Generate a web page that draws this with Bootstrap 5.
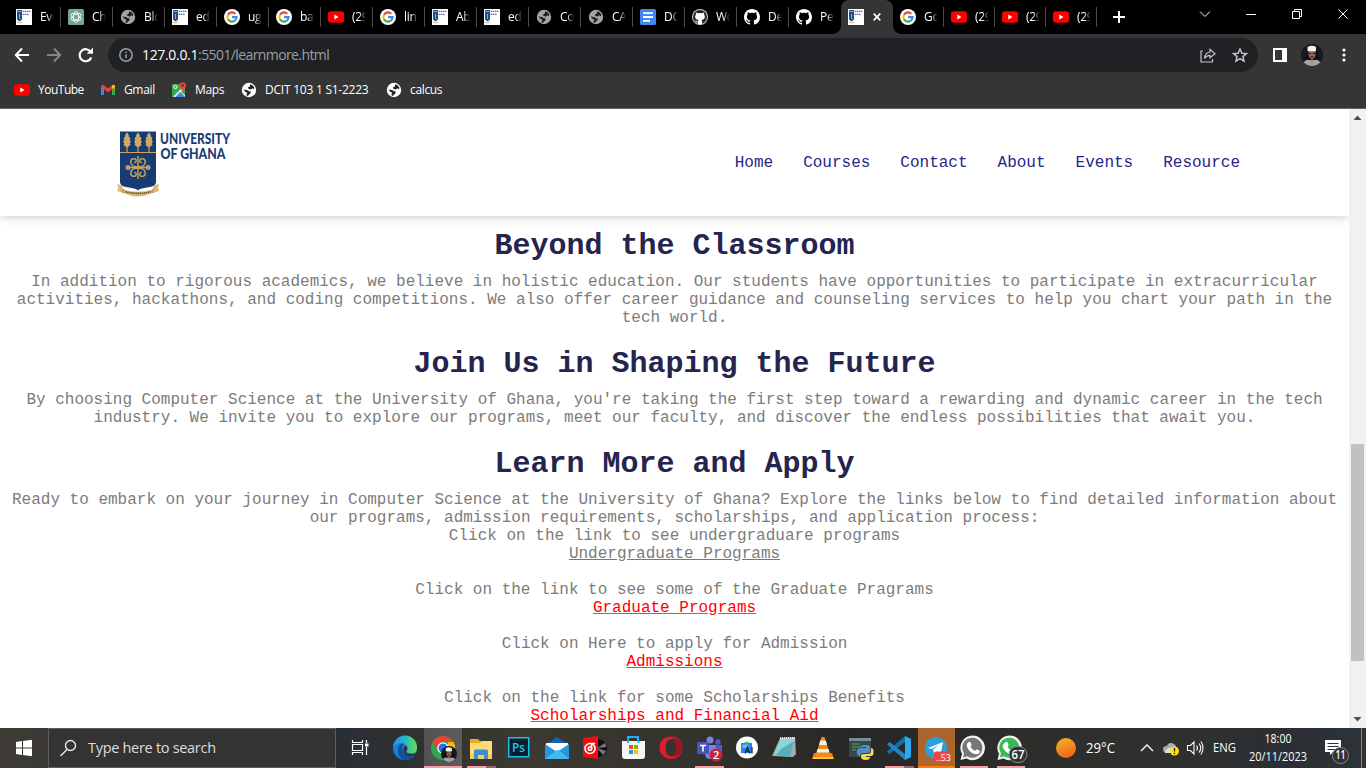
<!DOCTYPE html>
<html lang="en">
<head>
<meta charset="utf-8">
<title>Learn More</title>
<link href="https://cdn.jsdelivr.net/npm/bootstrap@5.3.0/dist/css/bootstrap.min.css" rel="stylesheet">
<style>
html,body{height:100%;overflow:hidden}
body{font-family:"Open Sans","Noto Sans",sans-serif;font-size:12px;color:#fff;line-height:16px}
svg{display:block;flex:none}
.desk{width:1366px;height:768px}
/* browser chrome */
.strip{height:34px;background:#000;padding-left:9px}
.btab{width:52px;height:34px;padding-left:7px;position:relative}
.btab:after{content:"";position:absolute;right:0;top:7px;width:1px;height:20px;background:#4a4a4a}
.btab.nosep:after{display:none}
.btab.late{width:51px}
.btab .ttl{width:14px;margin-left:8px;overflow:hidden;white-space:nowrap;letter-spacing:-.3px;-webkit-mask-image:linear-gradient(90deg,#000 50%,transparent 100%)}
.btab.live{background:#353535;border-radius:8px 8px 0 0}
.btab.live:before{content:"";position:absolute;left:-8px;right:-8px;bottom:0;height:8px;background:radial-gradient(circle at 0 0,transparent 7.5px,#353535 8px) left/8px 8px no-repeat,radial-gradient(circle at 100% 0,transparent 7.5px,#353535 8px) right/8px 8px no-repeat}
.tools{height:42px;background:#353535;padding-left:14px}
.omni{height:34px;width:1150px;border-radius:17px;background:#202124;margin-left:14px;padding:0 9px 0 10px;font-size:14px}
.omni .addr{letter-spacing:-.6px;color:#9aa0a6}
.omni .host{letter-spacing:-.33px;color:#fff}
.marks{height:33px;background:#353535;border-bottom:1px solid #68605f;padding-left:14px;font-size:12px}
.marks span{letter-spacing:-.35px;white-space:nowrap}
/* web page */
.view{height:619px;background:#fff;overflow:hidden}
.site{width:1349px;font-family:"Liberation Mono",monospace;font-size:16px;line-height:18px;color:#7c7c7c}
.site header{height:107px;padding:0 109px 0 108px;box-shadow:0 0 10px rgba(0,0,0,.25);position:relative}
.site header a{color:#262689;text-decoration:none}
.site nav{gap:30px}
.site section{padding:13px 10px 0}
.site h1{font-size:30px;font-weight:700;line-height:34px;color:#24244f;margin:0 0 10px}
.site p{margin:0 0 20px}
.site .more a{color:#f00;text-decoration:underline;text-decoration-color:#777}
.site .more a.plain{color:#7c7c7c}
.sbar{width:17px;background:#f1f1f1;position:relative;z-index:1}
.thumb{width:13px;height:217px;background:#c1c1c1;margin-top:318px}
/* taskbar */
.task{height:40px;background:linear-gradient(90deg,#3f3c37 0,#3b3935 48px,#2a2f35 345px,#30322f 420px,#3c3932 520px,#35332d 680px,#272726 850px,#2c2c2a 1000px,#30302e 1140px,#2b2f33 1290px,#2d3337 1366px)}
.find{width:288px;height:40px;background:#333;border:1px solid #5d5d5d;padding-left:10px;color:#ddd}
.find span{margin-left:11px;letter-spacing:-.3px;font-size:14.5px}
.app{width:38px;height:40px;position:relative;flex:none}
.app.slim{width:37px}
.app.on:after{content:"";position:absolute;left:5px;right:4px;bottom:0;height:2px;background:#f99ba5}
.app.sel{background:linear-gradient(90deg,#505151,#5c5c5b)}
.app.sel:after{left:0;right:0}
.app.two:after{background:linear-gradient(90deg,#f99ba5 67%,#93666a 67%)}
.app.tg{background:linear-gradient(#a9652c,#ae662b)}
.app.tg:after{left:0;right:0;background:#ff7a08}
</style>
<script src="https://cdn.jsdelivr.net/npm/bootstrap@5.3.0/dist/js/bootstrap.bundle.min.js"></script>
</head>
<body>
<svg width="0" height="0" class="position-absolute">
<defs>
<symbol id="ug" viewBox="0 0 16 16"><path fill="#fff" d="M0 0h16v16H0z"/><path fill="#234d80" d="M1 1h5v9.500l-2.500 2-2.500-2z"/><path stroke="#c2a468" d="M1.500 2.500h4M3.500 5v5"/><path stroke="#d2b076" fill="none" d="M1 13q2.500 2 5 0"/><path stroke="#5a79a5" stroke-width="1.300" stroke-dasharray="1.500 .5" d="M6.500 2.300H15M6.500 5.300H13"/></symbol>
<symbol id="gpt" viewBox="0 0 16 16"><rect width="16" height="16" rx="1.500" fill="#73a698"/><g fill="none" stroke="#fff" stroke-width=".8"><ellipse cx="8" cy="8" rx="2.700" ry="5.500"/><ellipse cx="8" cy="8" rx="2.700" ry="5.500" transform="rotate(60 8 8)"/><ellipse cx="8" cy="8" rx="2.700" ry="5.500" transform="rotate(120 8 8)"/></g></symbol>
<symbol id="globe" viewBox="0 0 16 16"><circle cx="8" cy="8" r="7.200" fill="currentColor"/><path fill="#202124" d="M9 2.300 11.500 3.200 13.300 5.500 13 7.200 11.300 6.300 10 7.500 8.300 7.200 7 6.300 7.300 5 9 4.600zM2.500 7.500 6 8 8 9.200 9.800 9.500 9.300 11.500 7.500 13 7 14 4.500 12.800 6 12.400 6.200 10.800 4.300 9.800z"/></symbol>
<symbol id="goo" viewBox="0 0 16 16"><circle cx="8" cy="8" r="8" fill="#fff"/><g fill="none" stroke-width="2.200"><path stroke="#ea4335" d="M4 5.700A4.600 4.600 0 0 1 11.300 4.700"/><path stroke="#fbbc05" d="M4 5.700A4.600 4.600 0 0 0 4 10.300"/><path stroke="#34a853" d="M4 10.300A4.600 4.600 0 0 0 11 11.500"/><path stroke="#4285f4" d="M11 11.500A4.600 4.600 0 0 0 12.600 8.100H8"/></g></symbol>
<symbol id="yt" viewBox="0 0 16 16"><rect y="2.200" width="16" height="11.600" rx="2.800" fill="#f00"/><path fill="#fff" d="M6.300 5.500v5l4.200-2.500z"/></symbol>
<symbol id="doc" viewBox="0 0 16 16"><rect width="16" height="16" rx="1.500" fill="#4285f4"/><path stroke="#fff" stroke-width="1.800" d="M3 4.200h10M3 8h10M3 11.800h7"/></symbol>
<symbol id="ghp" viewBox="0 0 16 16"><path d="M8 0C3.580 0 0 3.580 0 8c0 3.540 2.290 6.530 5.470 7.590.4.070.550-.170.550-.380 0-.190-.010-.820-.010-1.490-2.010.370-2.530-.490-2.690-.940-.090-.230-.480-.940-.820-1.130-.280-.150-.680-.520-.010-.530.630-.010 1.080.580 1.230.820.720 1.210 1.870.870 2.330.660.070-.520.280-.870.510-1.070-1.780-.2-3.640-.890-3.640-3.950 0-.870.310-1.590.820-2.150-.080-.2-.360-1.020.080-2.120 0 0 .670-.210 2.200.820.640-.180 1.320-.270 2-.270s1.360.090 2 .270c1.530-1.040 2.200-.820 2.200-.820.440 1.100.160 1.920.080 2.120.510.560.820 1.270.820 2.150 0 3.070-1.870 3.750-3.650 3.950.290.250.540.730.540 1.480 0 1.070-.010 1.930-.010 2.200 0 .210.150.460.550.380A8.010 8.010 0 0 0 16 8c0-4.420-3.580-8-8-8"/></symbol>
<symbol id="gh" viewBox="0 0 16 16"><use href="#ghp" fill="#fff"/></symbol>
<symbol id="ghd" viewBox="0 0 16 16"><circle cx="8" cy="8" r="8" fill="#c9ccd0"/><circle cx="8" cy="8" r="7" fill="#24292f"/><path fill="#fff" d="M4 3.500l2 .8q2-.5 4 0l2-.8.2 2.200q1 1.300.6 3-.6 2-3.300 2.300.5.500.5 1.500v2.500q-2 .8-4 0v-1.500q-1.700.3-2.300-1.300l-.7-.8q1-.2 1.500.7.600.8 1.500.4 0-1 .5-1.500-2.700-.3-3.300-2.300-.4-1.700.6-3z"/></symbol>
<symbol id="nun" viewBox="0 0 22 22"><circle cx="11" cy="11" r="11" fill="#17171f"/><path fill="#a4a4ac" d="M2.500 18 8 14.500h6l5.500 3.500A11 11 0 0 1 2.500 18z"/><path fill="#0c0c10" d="M6 6h10l1.500 9-3.500 1-6 0-3.500-1z"/><ellipse cx="11" cy="10" rx="3.600" ry="5" fill="#926553"/><path fill="#f2f2f2" d="M6.500 3q4.500-2.500 8.500 0v4.300H6.500z"/><path stroke="#241514" d="M8 9.500h2M12 9.500h2M9.800 12.700h2.400"/><path stroke="#b58068" stroke-width="1.500" d="M11 15v6"/></symbol>
</defs>
</svg>
<div class="desk d-flex flex-column">
<div class="strip d-flex">
<div class="btab d-flex align-items-center"><svg width="16" height="16"><use href="#ug"/></svg><span class="ttl">Eve</span></div>
<div class="btab d-flex align-items-center"><svg width="16" height="16"><use href="#gpt"/></svg><span class="ttl">Ch</span></div>
<div class="btab d-flex align-items-center"><svg width="16" height="16" color="#a0a4a8"><use href="#globe"/></svg><span class="ttl">Blo</span></div>
<div class="btab d-flex align-items-center"><svg width="16" height="16"><use href="#ug"/></svg><span class="ttl">ed</span></div>
<div class="btab d-flex align-items-center"><svg width="16" height="16"><use href="#goo"/></svg><span class="ttl">ug</span></div>
<div class="btab d-flex align-items-center"><svg width="16" height="16"><use href="#goo"/></svg><span class="ttl">ba</span></div>
<div class="btab d-flex align-items-center"><svg width="16" height="16"><use href="#yt"/></svg><span class="ttl">(29</span></div>
<div class="btab d-flex align-items-center"><svg width="16" height="16"><use href="#goo"/></svg><span class="ttl">lin</span></div>
<div class="btab d-flex align-items-center"><svg width="16" height="16"><use href="#ug"/></svg><span class="ttl">Ab</span></div>
<div class="btab d-flex align-items-center"><svg width="16" height="16"><use href="#ug"/></svg><span class="ttl">ed</span></div>
<div class="btab d-flex align-items-center"><svg width="16" height="16" color="#a0a4a8"><use href="#globe"/></svg><span class="ttl">Co</span></div>
<div class="btab d-flex align-items-center"><svg width="16" height="16" color="#a0a4a8"><use href="#globe"/></svg><span class="ttl">CA</span></div>
<div class="btab d-flex align-items-center"><svg width="16" height="16"><use href="#doc"/></svg><span class="ttl">DC</span></div>
<div class="btab d-flex align-items-center"><svg width="16" height="16"><use href="#ghd"/></svg><span class="ttl">Wo</span></div>
<div class="btab d-flex align-items-center"><svg width="16" height="16"><use href="#gh"/></svg><span class="ttl">De</span></div>
<div class="btab nosep d-flex align-items-center"><svg width="16" height="16"><use href="#gh"/></svg><span class="ttl">Pe</span></div>
<div class="btab live nosep d-flex align-items-center"><svg width="16" height="16"><use href="#ug"/></svg><svg width="8" height="8" style="margin-left:9px" stroke="#fff" stroke-width="1.700"><path d="M.7.700l6.600 6.600M7.300.700.7 7.300"/></svg></div>
<div class="btab late d-flex align-items-center"><svg width="16" height="16"><use href="#goo"/></svg><span class="ttl">Go</span></div>
<div class="btab late d-flex align-items-center"><svg width="16" height="16"><use href="#yt"/></svg><span class="ttl">(29</span></div>
<div class="btab late d-flex align-items-center"><svg width="16" height="16"><use href="#yt"/></svg><span class="ttl">(29</span></div>
<div class="btab late d-flex align-items-center"><svg width="16" height="16"><use href="#yt"/></svg><span class="ttl">(29</span></div>
<svg width="269" height="34" fill="none" stroke="#fff"><path stroke-width="2" d="M22 11v12M16 17h12"/><path d="M103 11.500l5 5 5-5M149 14.500h10M197.500 12v-2.500h7v7H202M195.500 11.500h7v7h-7zM241.500 9.500l9 9M250.500 9.500l-9 9"/></svg>
</div>
<div class="tools d-flex align-items-center">
<svg width="80" height="18" fill="none" stroke-width="2"><path stroke="#fff" d="M15 9H2M8 2.500 1.800 9 8 15.500"/><path stroke="#868686" d="M33 9h13M40 2.500 46.200 9 40 15.500"/><path stroke="#fff" stroke-width="2.200" d="M77.200 11.500a6 6 0 1 1-.5-5.500"/><path fill="#fff" d="M79 1.500v6.300h-6.300z"/></svg>
<div class="omni d-flex align-items-center">
<svg width="16" height="16" fill="none" stroke="#9aa0a6" stroke-width="1.500"><circle cx="8" cy="8" r="6.200"/><path d="M8 7.200v4M8 4.500v1.500"/></svg>
<div class="addr flex-grow-1 ps-2"><span class="host">127.0.0.1</span>:5501/learnmore.html</div>
<svg width="50" height="18" fill="none" stroke="#c4c4c4" stroke-width="1.200"><path d="M4 5H2v11h11.500v-3M5.500 12.500q.5-6 5.500-6.500V3.300L16 7.800l-5 4V9.300Q7.500 9.500 5.500 12.500z"/><path stroke-width="1.500" d="M41 3l1.900 4.200 4.500.4-3.400 3 1 4.500-4-2.400-4 2.400 1-4.500-3.400-3 4.500-.4z"/></svg>
</div>
<svg width="14" height="14" style="margin-left:15px"><path fill="#fff" d="M0 0h14v14H0z"/><path fill="#353535" d="M2 2h7v10H2z"/></svg>
<svg width="22" height="22" style="margin-left:14px"><use href="#nun"/></svg>
<svg width="4" height="14" style="margin-left:19px" fill="#fff"><circle cx="2" cy="2" r="1.600"/><circle cx="2" cy="7" r="1.600"/><circle cx="2" cy="12" r="1.600"/></svg>
</div>
<div class="marks d-flex align-items-start">
<svg width="16" height="16" style="margin-top:6px"><use href="#yt"/></svg><span style="width:78px;padding:6px 0 0 8px;letter-spacing:-.5px">YouTube</span>
<svg width="14" height="16" style="margin:6px 0 0 -7px" fill="none"><path stroke="#4285f4" stroke-width="3" d="M1.500 13V4"/><path stroke="#34a853" stroke-width="3" d="M12.500 13V4"/><path stroke="#ea4335" stroke-width="3" d="M1 3.700l6 4.800 6-4.800"/><path stroke="#fbbc04" stroke-width="3" d="M12.500 3v3.500"/></svg><span style="width:56px;padding:6px 0 0 9px">Gmail</span>
<svg width="16" height="16" style="margin-top:6px"><path fill="#34a853" d="M1 2h13v13H1z"/><path fill="#4285f4" d="M7 9 14 15H5z"/><path fill="#eee" d="M2 14.800 14 3v3L5 15zM8 8l6 5v2z"/><path fill="#4285f4" d="M9 10l4.500 5H4.500z"/><circle cx="4.500" cy="5" r="1.600" fill="none" stroke="#fff"/><path fill="#ea4335" d="M11.700 10C11 7 8.500 6 8.500 3.500a3.200 3.200 0 0 1 6.500 0C15 6 12.500 7 11.700 10z"/><circle cx="11.700" cy="3.500" r="1.200" fill="#8e1d17"/></svg><span style="width:54px;padding:6px 0 0 8px">Maps</span>
<svg width="16" height="16" style="margin-top:6px"><use href="#globe"/></svg><span style="width:129px;padding:6px 0 0 8px;letter-spacing:-.24px">DCIT 103 1 S1-2223</span>
<svg width="16" height="16" style="margin-top:6px"><use href="#globe"/></svg><span style="padding:6px 0 0 8px">calcus</span>
</div>
<div class="view d-flex">
<div class="site">
<header class="d-flex align-items-center justify-content-between">
<svg width="130" height="78" viewBox="108 124 130 78">
<path fill="#173c73" d="M120 131.500h36v50q0 4-4 5l-10 2q-3 .6-4 2-1-1.400-4-2l-10-2q-4-1-4-5z"/>
<path stroke="#c9a45e" d="M120 152.500h36"/>
<g id="ear"><path stroke="#c9a45e" stroke-width="1.200" d="M127 133v19"/><path fill="#d0aa65" d="M127 132.500l2 3-.3 1 1.700 1.500-.6 2 1 1.500-1 2 .7 1.500-3.500 2.500-3.500-2.500.7-1.500-1-2 1-1.500-.6-2 1.700-1.500-.3-1z"/></g><use href="#ear" x="11"/><use href="#ear" x="22"/>
<g fill="none" stroke="#c9a45e" stroke-width="1.400"><path d="M138 156v23M127 167.500h22"/><path d="M138 167q-7 0-7.300-5 0-3.300 3-3.400 2.700 0 2.500 2.600-.2 1.600-2 1.400M138 167q7 0 7.300-5 0-3.300-3-3.400-2.700 0-2.500 2.600.2 1.600 2 1.400M138 168q-7 0-7.300 5 0 3.300 3 3.400 2.700 0 2.500-2.600-.2-1.600-2-1.400M138 168q7 0 7.300 5 0 3.300-3 3.400-2.700 0-2.500-2.600.2-1.600 2-1.400"/><circle cx="128" cy="167.500" r="1.800"/><circle cx="148" cy="167.500" r="1.800"/></g>
<path fill="#dcb979" d="M117 184l5 1.500 1.500 4q14.500 4.500 29 0l1.500-4 5-1.500-1 4 1 3-6.500 2q-14.500 7-29 0l-6.500-2 1.500-3z"/><path fill="none" stroke="#6d5a3c" stroke-width="1.600" stroke-dasharray="1.500 .6" d="M125 191.700q13 3.300 26 0"/><path stroke="#a98341" d="M123 189v4M153 189v4"/>
<g fill="#173c73" font-family="Lato" font-weight="900" font-size="14.500"><text x="160" y="143.500" textLength="70" lengthAdjust="spacingAndGlyphs">UNIVERSITY</text><text x="160.500" y="159" textLength="65" lengthAdjust="spacingAndGlyphs">OF GHANA</text></g>
</svg>
<nav class="d-flex"><a href="#">Home</a><a href="#">Courses</a><a href="#">Contact</a><a href="#">About</a><a href="#">Events</a><a href="#">Resource</a></nav>
</header>
<section class="text-center">
<h1>Beyond the Classroom</h1>
<p>In addition to rigorous academics, we believe in holistic education. Our students have opportunities to participate in extracurricular activities, hackathons, and coding competitions. We also offer career guidance and counseling services to help you chart your path in the tech world.</p>
<h1>Join Us in Shaping the Future</h1>
<p>By choosing Computer Science at the University of Ghana, you're taking the first step toward a rewarding and dynamic career in the tech industry. We invite you to explore our programs, meet our faculty, and discover the endless possibilities that await you.</p>
<h1>Learn More and Apply</h1>
<p class="more">Ready to embark on your journey in Computer Science at the University of Ghana? Explore the links below to find detailed information about our programs, admission requirements, scholarships, and application process:<br>Click on the link to see undergraduare programs<br><a class="plain" href="#">Undergraduate Programs</a><br><br>Click on the link to see some of the Graduate Pragrams<br><a href="#">Graduate Programs</a><br><br>Click on Here to apply for Admission<br><a href="#">Admissions</a><br><br>Click on the link for some Scholarships Benefits<br><a href="#">Scholarships and Financial Aid</a></p>
</section>
</div>
<div class="sbar d-flex flex-column align-items-center">
<svg width="17" height="17"><path fill="#505050" d="M4.500 11h8l-4-4.500z"/></svg>
<div class="thumb"></div>
<svg width="17" height="17" class="mt-auto"><path fill="#505050" d="M4.500 6h8l-4 4.500z"/></svg>
</div>
</div>
<div class="task d-flex">
<svg width="48" height="40" fill="#fff"><path d="M16 14l6-.9V19.500h-6zM23 13l9-1.200v7.700h-9zM16 20.500h6V27l-6-.9zM23 20.500h9v7.700L23 27z"/></svg>
<div class="find d-flex align-items-center flex-shrink-0"><svg width="18" height="18" fill="none" stroke="#e8e8e8" stroke-width="1.400"><circle cx="11.500" cy="6.500" r="5"/><path d="M8 10.500 1.500 17"/></svg><span>Type here to search</span></div>
<svg width="50" height="40" fill="none" stroke="#fff" stroke-width="1.200"><path d="M16.500 12v2.500h10V12M16.500 27v-2.500h10V27M16.500 16.500h10v6h-10zM30.500 12v3M30.500 19v8"/><path fill="#fff" stroke="none" d="M29 15.500h3.500v3H29z"/></svg>
<div class="app"><svg width="38" height="40"><defs><linearGradient id="e1"><stop stop-color="#1b8fe0"/><stop offset=".5" stop-color="#25b9c9"/><stop offset="1" stop-color="#6ade4b"/></linearGradient></defs><circle cx="19" cy="20" r="12" fill="#1580d4"/><path fill="url(#e1)" d="M7 19A12 12 0 0 1 31 20q0 5.500-6 5.500-5 0-4.500-3 2.500-2 0-5-5-5.500-13.500 1.500z"/><path fill="#0e509f" d="M12 20q1-4.500 6-4.300-4 4 0 9 4.500 4.300 10.500 2.800-3.500 5-9.500 4.500-8-1.500-7-12z"/><path fill="#30343a" d="M20.500 22.500q-1 3.200 4.500 3.400 3 .1 5-1.200-1 3-3 3-6.500 1-9-3.500-2-4 1.500-6.500 3 1.200 1 4.800z"/></svg></div>
<div class="app on sel"><svg width="38" height="40"><circle cx="19" cy="20" r="12" fill="#2da94f"/><path fill="#ea4335" d="M8.600 14a12 12 0 0 1 20.800 0H19l-5 9z"/><path fill="#fbbc05" d="M29.400 14A12 12 0 0 1 19 32l5-9V14z"/><circle cx="19" cy="20" r="5.800" fill="#fff"/><circle cx="19" cy="20" r="4.500" fill="#1a73e8"/><use href="#nun" x="17" y="18" width="16" height="16"/></svg></div>
<div class="app on two"><svg width="38" height="40"><path fill="#e8a92c" d="M8 11h8l2 2h11v4H8z"/><path fill="#fddc73" d="M8 15h10l2-2h10v18H8z"/><path fill="#f7cf5b" d="M8 26h22v5H8z"/><path fill="#3f8ecf" d="M12 31v-8q0-1.500 1.500-1.500h11q1.500 0 1.500 1.500v8h-4v-4h-6v4z"/></svg></div>
<div class="app"><svg width="38" height="40"><path fill="#041f2d" stroke="#1cbfe6" stroke-width="1.500" d="M8.700 9.700h20v19h-20z"/><text x="12" y="24" font-family="Open Sans" font-size="12" font-weight="600" fill="#1cc7ef" textLength="13" lengthAdjust="spacingAndGlyphs">Ps</text></svg></div>
<div class="app"><svg width="38" height="40"><path fill="#1562b2" d="M7 17 19 9l12 8z"/><path fill="#fff" d="M8 15h22v9H8z"/><path fill="#2796e0" d="M7 16l12 8 12-8v15H7z"/><path fill="#43bbf1" d="M7 31l12-9 2 0L31 31z"/></svg></div>
<div class="app"><svg width="38" height="40"><circle cx="22" cy="20" r="9" fill="#111"/><path fill="#777" d="M21 20l8-5 1.500 4zM21 20l9 3-3 4z"/><path fill="#f20b10" d="M7 10l15-2v23L7 29z"/><g fill="none" stroke="#fff" stroke-width="1.600"><circle cx="14" cy="20.500" r="5"/><circle cx="14" cy="20.500" r="1.700"/><path d="M15.500 20.500v-5h3.500"/></g></svg></div>
<div class="app"><svg width="38" height="40"><path fill="none" stroke="#22aeea" stroke-width="2" d="M14 14V9h10v5"/><path fill="#f6f6f6" d="M8 13h23v15q0 3-3 3H11q-3 0-3-3z"/><path stroke="#22aeea" stroke-width="2" d="M13 14h2M23.500 14h2"/><path fill="#f25022" d="M15 17h4v4h-4z"/><path fill="#7fba00" d="M20 17h4v4h-4z"/><path fill="#00a4ef" d="M15 22h4v4h-4z"/><path fill="#ffb900" d="M20 22h4v4h-4z"/></svg></div>
<div class="app"><svg width="38" height="40"><path fill="#df1c2c" fill-rule="evenodd" d="M19 8.500c-7 0-11.500 5-11.500 11S12 31 19 31s11.500-5 11.500-11.500S26 8.500 19 8.500zm0 2.800c3.500 0 5.400 3.700 5.400 8.400S22.500 28 19 28s-5.300-3.500-5.300-8.300 1.800-8.400 5.300-8.400z"/><path fill="#9c1422" d="M19 11.300c3.500 0 5.400 3.700 5.400 8.400S22.500 28 19 28c3 1.800 11 .5 11-8.500s-8-10.500-11-8.200z"/></svg></div>
<div class="app on"><svg width="38" height="40"><circle cx="20" cy="12" r="3.500" fill="#7b83eb"/><circle cx="28" cy="14" r="2.700" fill="#5059c9"/><path fill="#7b83eb" d="M15 17h11v8q-1 6-6 6t-5-6z"/><path fill="#5059c9" d="M26 17h6v9h-6z"/><rect x="7" y="14" width="12" height="12" rx="1" fill="#4b53bc"/><path stroke="#fff" stroke-width="1.600" d="M10 17.500h6M13 17.500v6"/><circle cx="26" cy="27" r="6.500" fill="#c4243f"/><text x="23" y="31" fill="#fff" font-size="11" font-weight="600">2</text></svg></div>
<div class="app"><svg width="38" height="40"><circle cx="19" cy="19.500" r="11" fill="#fff"/><path fill="#3ddc84" d="M14.500 16q4-5 9 0z"/><path fill="#2684ec" d="M13 15h11v10H13z"/><path fill="#78b4f5" d="M14.500 16.500h6V20h-6z"/><path fill="none" stroke="#12334c" stroke-width="1.300" d="M17 25.500 19.500 19 22 25.500M18 23.500h3M24 19v6.500"/></svg></div>
<div class="app"><svg width="38" height="40"><path fill="#a8a8a0" d="M6 28 14 10l15-1 1 17-3 3z"/><path fill="#8bd6dd" d="M8 27 15 10l14 1-5 18z"/><path fill="#3c9aac" d="M15 21 28 13l-4 16-14-2z" opacity=".65"/><path stroke="#eee" stroke-dasharray="1 1" stroke-width="2" d="M14 10h15"/></svg></div>
<div class="app"><svg width="38" height="40"><path fill="#f07f0a" d="M10 25h18l2 6H8z"/><path fill="#f58a12" d="M17.500 9h3l6 19q-8 3-15 0z"/><path fill="#eee" d="M16.300 12.500h5.400l1.500 4.500h-8.400zM13.500 21h11l1 3.500h-13z"/><path fill="#ffc244" d="M9 29h20v2H9z"/></svg></div>
<div class="app"><svg width="38" height="40"><path fill="#34474f" d="M7 10h22v19H7z"/><path fill="#778e99" d="M7 10h22v3H7z"/><path stroke="#577f57" stroke-width="1.300" d="M10 16h8M10 19h10M10 22h4"/><path fill="#4f8fc6" d="M20 17h5q3 0 3 3v3q0 2-2 2h-5q-3 0-3 3h-1q-3-1-2-6 1-2 5-2h4v-1h-5z"/><path fill="#fcd551" d="M29 20q3 0 2.500 5 0 3-3 3H24v1h4q0 3-4 3-5 0-5-3v-1q0-2 3-2h4q3 0 3-3z"/></svg></div>
<div class="app on two"><svg width="38" height="40"><path fill="#0f70b3" d="M25 8 7 23.500 9.500 26 25 14z"/><path fill="#1d86ca" d="M7 16.500 9.500 14 25 26v6z"/><path fill="#2da9ef" d="M25 8 31 11v18l-6 3z"/></svg></div>
<div class="app tg on slim"><svg width="37" height="40"><circle cx="18" cy="20" r="11" fill="#2aa0db"/><path fill="#fff" d="M10 20l15-6-2.500 13-4.500-3.500-2 2.500-.8-4.500 6-5-7.500 4.600z"/><rect x="16" y="23.500" width="16" height="11" rx="2" fill="#ef4444"/><text x="18" y="32.500" fill="#fff" font-size="9">..53</text></svg></div>
<div class="app on slim"><svg width="37" height="40" viewBox="1.500 0 37 40"><path fill="#f2f2f2" d="M7 32l1.500-6A12.300 12.300 0 1 1 13 30.500z"/><path fill="#74787a" d="M9.500 29.600l1-4.300a10 10 0 1 1 3.200 3z"/><path fill="#fff" d="M15 14q1.600-1 2.300 1l.7 2q0 1-1 1.700 1.500 3 4.500 4.200l1.500-1.700 3.200 1.600q.6 1.200-1 2.700-2.500 1.600-6-.3-5-3-6-7.500 0-2.300 1.800-3.700z"/></svg></div>
<div class="app on slim"><svg width="37" height="40" viewBox="1.500 0 37 40"><path fill="#f2f2f2" d="M7 32l1.500-6A12.300 12.300 0 1 1 13 30.500z"/><path fill="#39ba52" d="M9.500 29.600l1-4.300a10 10 0 1 1 3.200 3z"/><path fill="#fff" d="M15 14q1.600-1 2.300 1l.7 2q0 1-1 1.700 1.500 3 4.500 4.200l2 2-4 1.500q-6-3-7.300-7.700 0-2.300 1.800-3.700z"/><rect x="18.500" y="18.500" width="18" height="16" rx="8" fill="#333" stroke="#888"/><text x="21" y="31" fill="#fff" font-size="12" font-weight="600" textLength="13" lengthAdjust="spacingAndGlyphs">67</text></svg></div>
<svg width="337" height="40" viewBox="1029 728 337 40" font-family="Open Sans" fill="#fff" font-size="12">
<defs><linearGradient id="sun" x2=".4" y2="1"><stop stop-color="#f7b62e"/><stop offset="1" stop-color="#f06a14"/></linearGradient></defs>
<circle cx="1066" cy="748" r="10" fill="url(#sun)"/>
<text x="1086" y="753" font-size="14" textLength="29" lengthAdjust="spacingAndGlyphs">29°C</text>
<path fill="none" stroke="#fff" stroke-width="1.300" d="M1141 751l6-6 6 6"/>
<path fill="#aaa" d="M1166 753q-3-1-3-4t4-3q1-3.500 4.500-3t4.500 3.500l-3 6.500z"/><path fill="#ddd" d="M1165 753q0-4 4-5 4-2 6 1v4z"/><circle cx="1174.500" cy="751" r="4.500" fill="#fbe114"/><path stroke="#222" stroke-width="1.300" d="M1174.500 748v3.500M1174.500 752.700v1.300"/>
<path fill="none" stroke="#fff" stroke-width="1.100" d="M1187.500 745.500h3l3.500-3.500v12l-3.500-3.500h-3zM1196.500 745.500q2 2.500 0 5M1199 743.500q3.500 4.500 0 9M1201 741.500q4 6.500 0 13"/>
<text x="1213" y="752" textLength="23" lengthAdjust="spacingAndGlyphs">ENG</text>
<text x="1264.500" y="743" textLength="27" lengthAdjust="spacingAndGlyphs">18:00</text>
<text x="1249" y="761" textLength="58" lengthAdjust="spacingAndGlyphs">20/11/2023</text>
<path d="M1325 740h16v12h-8l-3 3v-3h-5z"/><path stroke="#333" d="M1327.500 743.500h11M1327.500 746.500h11M1327.500 749.500h8"/><circle cx="1340.500" cy="755.500" r="8" fill="#303336" stroke="#85888a"/><text x="1335.500" y="759" font-size="12" font-weight="600" textLength="10" lengthAdjust="spacingAndGlyphs">11</text>
<path stroke="#858789" d="M1361.500 728v40"/>
</svg>
</div>
</div>
</body>
</html>
